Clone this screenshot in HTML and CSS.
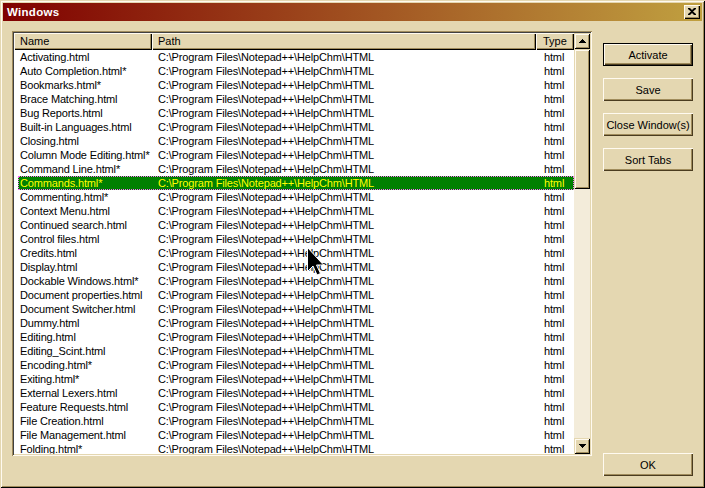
FILE: index.html
```html
<!DOCTYPE html>
<html>
<head>
<meta charset="utf-8">
<link rel="stylesheet" href="styles.css">
</head>
<body>
<div class="window">
  <div class="titlebar">
    <span class="title">Windows</span>
    <span class="closebtn"><svg width="8" height="7" viewBox="0 0 8 7"><path d="M0 0h2l2 2 2-2h2v1L5 3.5 8 6v1H6L4 5 2 7H0V6l3-2.5L0 1z" fill="#000"/></svg></span>
  </div>
  <div class="content">
    <div class="listbox">
      <div class="listmain">
        <div class="header">
          <div class="hcell hname">Name</div>
          <div class="hcell hpath">Path</div>
          <div class="hcell htype">Type</div>
        </div>
        <div class="rows">
          <div class="row"><span class="c1">Activating.html</span><span class="c2">C:\Program Files\Notepad++\HelpChm\HTML</span><span class="c3">html</span></div>
          <div class="row"><span class="c1">Auto Completion.html*</span><span class="c2">C:\Program Files\Notepad++\HelpChm\HTML</span><span class="c3">html</span></div>
          <div class="row"><span class="c1">Bookmarks.html*</span><span class="c2">C:\Program Files\Notepad++\HelpChm\HTML</span><span class="c3">html</span></div>
          <div class="row"><span class="c1">Brace Matching.html</span><span class="c2">C:\Program Files\Notepad++\HelpChm\HTML</span><span class="c3">html</span></div>
          <div class="row"><span class="c1">Bug Reports.html</span><span class="c2">C:\Program Files\Notepad++\HelpChm\HTML</span><span class="c3">html</span></div>
          <div class="row"><span class="c1">Built-in Languages.html</span><span class="c2">C:\Program Files\Notepad++\HelpChm\HTML</span><span class="c3">html</span></div>
          <div class="row"><span class="c1">Closing.html</span><span class="c2">C:\Program Files\Notepad++\HelpChm\HTML</span><span class="c3">html</span></div>
          <div class="row"><span class="c1">Column Mode Editing.html*</span><span class="c2">C:\Program Files\Notepad++\HelpChm\HTML</span><span class="c3">html</span></div>
          <div class="row"><span class="c1">Command Line.html*</span><span class="c2">C:\Program Files\Notepad++\HelpChm\HTML</span><span class="c3">html</span></div>
          <div class="row sel"><span class="c1">Commands.html*</span><span class="c2">C:\Program Files\Notepad++\HelpChm\HTML</span><span class="c3">html</span></div>
          <div class="row"><span class="c1">Commenting.html*</span><span class="c2">C:\Program Files\Notepad++\HelpChm\HTML</span><span class="c3">html</span></div>
          <div class="row"><span class="c1">Context Menu.html</span><span class="c2">C:\Program Files\Notepad++\HelpChm\HTML</span><span class="c3">html</span></div>
          <div class="row"><span class="c1">Continued search.html</span><span class="c2">C:\Program Files\Notepad++\HelpChm\HTML</span><span class="c3">html</span></div>
          <div class="row"><span class="c1">Control files.html</span><span class="c2">C:\Program Files\Notepad++\HelpChm\HTML</span><span class="c3">html</span></div>
          <div class="row"><span class="c1">Credits.html</span><span class="c2">C:\Program Files\Notepad++\HelpChm\HTML</span><span class="c3">html</span></div>
          <div class="row"><span class="c1">Display.html</span><span class="c2">C:\Program Files\Notepad++\HelpChm\HTML</span><span class="c3">html</span></div>
          <div class="row"><span class="c1">Dockable Windows.html*</span><span class="c2">C:\Program Files\Notepad++\HelpChm\HTML</span><span class="c3">html</span></div>
          <div class="row"><span class="c1">Document properties.html</span><span class="c2">C:\Program Files\Notepad++\HelpChm\HTML</span><span class="c3">html</span></div>
          <div class="row"><span class="c1">Document Switcher.html</span><span class="c2">C:\Program Files\Notepad++\HelpChm\HTML</span><span class="c3">html</span></div>
          <div class="row"><span class="c1">Dummy.html</span><span class="c2">C:\Program Files\Notepad++\HelpChm\HTML</span><span class="c3">html</span></div>
          <div class="row"><span class="c1">Editing.html</span><span class="c2">C:\Program Files\Notepad++\HelpChm\HTML</span><span class="c3">html</span></div>
          <div class="row"><span class="c1">Editing_Scint.html</span><span class="c2">C:\Program Files\Notepad++\HelpChm\HTML</span><span class="c3">html</span></div>
          <div class="row"><span class="c1">Encoding.html*</span><span class="c2">C:\Program Files\Notepad++\HelpChm\HTML</span><span class="c3">html</span></div>
          <div class="row"><span class="c1">Exiting.html*</span><span class="c2">C:\Program Files\Notepad++\HelpChm\HTML</span><span class="c3">html</span></div>
          <div class="row"><span class="c1">External Lexers.html</span><span class="c2">C:\Program Files\Notepad++\HelpChm\HTML</span><span class="c3">html</span></div>
          <div class="row"><span class="c1">Feature Requests.html</span><span class="c2">C:\Program Files\Notepad++\HelpChm\HTML</span><span class="c3">html</span></div>
          <div class="row"><span class="c1">File Creation.html</span><span class="c2">C:\Program Files\Notepad++\HelpChm\HTML</span><span class="c3">html</span></div>
          <div class="row"><span class="c1">File Management.html</span><span class="c2">C:\Program Files\Notepad++\HelpChm\HTML</span><span class="c3">html</span></div>
          <div class="row"><span class="c1">Folding.html*</span><span class="c2">C:\Program Files\Notepad++\HelpChm\HTML</span><span class="c3">html</span></div>
        </div>
      </div>
      <div class="scrollbar">
        <div class="sbtn"><svg width="7" height="4" viewBox="0 0 7 4"><path d="M3 0h1v1h1v1h1v1h1v1H0V3h1V2h1V1h1z" fill="#000"/></svg></div>
        <div class="thumb"></div>
        <div class="track"></div>
        <div class="sbtn"><svg width="7" height="4" viewBox="0 0 7 4"><path d="M0 0h7v1H6v1H5v1H4v1H3V3H2V2H1V1H0z" fill="#000"/></svg></div>
      </div>
    </div>
    <div class="side">
      <div class="btn default">Activate</div>
      <div class="btn">Save</div>
      <div class="btn">Close Window(s)</div>
      <div class="btn">Sort Tabs</div>
      <div class="btn ok">OK</div>
    </div>
  </div>
  <svg class="cursor" width="17" height="29" viewBox="0 0 17 29"><path d="M0.5 0.5V24.5L6 19L10 28L13.5 26.5L9.5 18H16.5Z" fill="#000" stroke="#fff" stroke-width="1"/></svg>
</div>
</body>
</html>
```
FILE: styles.css
```css
* { box-sizing: border-box; }
html, body { margin: 0; padding: 0; }
body {
  width: 705px;
  height: 488px;
  overflow: hidden;
  font-family: "Liberation Sans", Arial, sans-serif;
  font-size: 11px;
  color: #000;
  background: #e4d7b1;
}
.window {
  position: relative;
  width: 705px;
  height: 488px;
  padding: 3px;
  background: #e4d7b1;
  box-shadow: inset 1px 1px #e4d7b1, inset -1px -1px #000, inset 2px 2px #fffaf0, inset -2px -2px #a08c5c;
  display: flex;
  flex-direction: column;
}
.titlebar {
  height: 18px;
  flex: none;
  background: linear-gradient(to right, #800000, #c0a040);
  display: flex;
  align-items: center;
  justify-content: space-between;
  padding: 0 2px 0 4px;
}
.title {
  color: #fff;
  font-weight: bold;
  font-size: 11.5px;
  letter-spacing: 0.3px;
}
.closebtn {
  width: 16px;
  height: 14px;
  background: #e4d7b1;
  box-shadow: inset 1px 1px #fffaf0, inset -1px -1px #000, inset -2px -2px #a08c5c;
  display: flex;
  align-items: center;
  justify-content: center;
  padding-bottom: 1px;
}
.content {
  flex: 1;
  display: flex;
  gap: 11px;
  padding: 10px 0 0 9px;
}
.listbox {
  width: 580px;
  height: 425px;
  display: flex;
  padding: 2px;
  background: #fff;
  box-shadow: inset 1px 1px #a08c5c, inset -1px -1px #fffaf0, inset 2px 2px #404040, inset -2px -2px #e4d7b1;
}
.listmain {
  width: 560px;
  display: flex;
  flex-direction: column;
  overflow: hidden;
}
.header {
  display: grid;
  grid-template-columns: 138px 384px 38px;
  height: 17px;
  flex: none;
}
.hcell {
  background: #e4d7b1;
  box-shadow: inset 1px 1px #fffaf0, inset -1px -1px #000, inset -2px -2px #a08c5c;
  line-height: 16px;
  padding-left: 6px;
  white-space: nowrap;
}
.htype { padding-left: 7px; }
.rows {
  flex: 1;
  overflow: hidden;
}
.row {
  display: grid;
  grid-template-columns: 138px 384px 38px;
  height: 14px;
  line-height: 14px;
  white-space: nowrap;
  letter-spacing: -0.15px;
}
.row span { padding-left: 6px; overflow: hidden; }
.row .c3 { padding-left: 8px; }
.row.sel {
  margin-left: 4px;
  grid-template-columns: 134px 384px 38px;
  background: #008000;
  color: #ffff00;
  outline: 1px dotted #ff66ff;
  outline-offset: -1px;
}
.row.sel .c1 { padding-left: 2px; }
.scrollbar {
  width: 16px;
  display: flex;
  flex-direction: column;
  background: #f3ecda;
}
.sbtn {
  height: 16px;
  flex: none;
  background: #e4d7b1;
  box-shadow: inset 1px 1px #e4d7b1, inset -1px -1px #000, inset 2px 2px #fffaf0, inset -2px -2px #a08c5c;
  display: flex;
  align-items: center;
  justify-content: center;
}
.thumb {
  height: 140px;
  flex: none;
  background: #e4d7b1;
  box-shadow: inset 1px 1px #e4d7b1, inset -1px -1px #000, inset 2px 2px #fffaf0, inset -2px -2px #a08c5c;
}
.track { flex: 1; }
.side {
  width: 90px;
  display: flex;
  flex-direction: column;
  gap: 12px;
  padding-top: 12px;
  padding-bottom: 9px;
}
.btn {
  height: 23px;
  flex: none;
  display: flex;
  align-items: center;
  justify-content: center;
  background: #e4d7b1;
  box-shadow: inset 1px 1px #fffaf0, inset -1px -1px #4a3c20, inset -2px -2px #a08c5c;
  white-space: nowrap;
}
.btn.default {
  box-shadow: inset 0 0 0 1px #000, inset 2px 2px #fffaf0, inset -2px -2px #4a3c20, inset -3px -3px #a08c5c;
}
.btn.ok { margin-top: auto; }
.cursor {
  position: absolute;
  left: 307px;
  top: 247px;
}
```
